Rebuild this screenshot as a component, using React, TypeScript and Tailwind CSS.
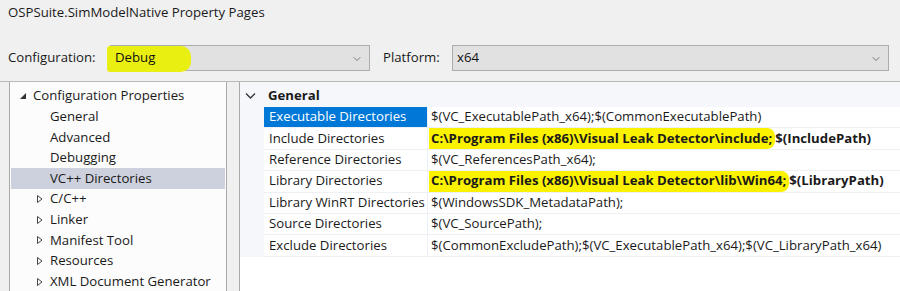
import { ChevronDown } from 'lucide-react';

const FONT = "font-['Segoe_UI','Open_Sans','Noto_Sans',sans-serif]";

interface TreeItem {
  label: string;
  kind: 'open' | 'closed' | 'leaf';
  depth: number;
  selected?: boolean;
}

const treeItems: TreeItem[] = [
  { label: 'Configuration Properties', kind: 'open', depth: 0 },
  { label: 'General', kind: 'leaf', depth: 1 },
  { label: 'Advanced', kind: 'leaf', depth: 1 },
  { label: 'Debugging', kind: 'leaf', depth: 1 },
  { label: 'VC++ Directories', kind: 'leaf', depth: 1, selected: true },
  { label: 'C/C++', kind: 'closed', depth: 1 },
  { label: 'Linker', kind: 'closed', depth: 1 },
  { label: 'Manifest Tool', kind: 'closed', depth: 1 },
  { label: 'Resources', kind: 'closed', depth: 1 },
  { label: 'XML Document Generator', kind: 'closed', depth: 1 },
];

interface PropRow {
  name: string;
  value: string;
  bold?: boolean;
  marked?: string;
  selected?: boolean;
}

const propRows: PropRow[] = [
  { name: 'Executable Directories', value: '$(VC_ExecutablePath_x64);$(CommonExecutablePath)', selected: true },
  {
    name: 'Include Directories',
    marked: 'C:\\Program Files (x86)\\Visual Leak Detector\\include;',
    value: '$(IncludePath)',
    bold: true,
  },
  { name: 'Reference Directories', value: '$(VC_ReferencesPath_x64);' },
  {
    name: 'Library Directories',
    marked: 'C:\\Program Files (x86)\\Visual Leak Detector\\lib\\Win64;',
    value: '$(LibraryPath)',
    bold: true,
  },
  { name: 'Library WinRT Directories', value: '$(WindowsSDK_MetadataPath);' },
  { name: 'Source Directories', value: '$(VC_SourcePath);' },
  { name: 'Exclude Directories', value: '$(CommonExcludePath);$(VC_ExecutablePath_x64);$(VC_LibraryPath_x64)' },
];

function Combo({ value, highlight, className }: { value: string; highlight?: boolean; className: string }) {
  return (
    <div className={`relative flex h-[26px] shrink-0 items-center border border-[#adadad] bg-[#e1e1e1] ${className}`}>
      {highlight && (
        <span className="absolute left-[-4px] top-[0px] h-[26px] w-[84px] rounded-r-[10px] rounded-l-[3px] bg-[#eaef12]" />
      )}
      <span className="relative pl-[4px] text-[#111]">{value}</span>
      <ChevronDown className="absolute right-[6px] top-[7px] h-[12px] w-[12px] text-[#555]" strokeWidth={1.5} />
    </div>
  );
}

function Arrow({ kind }: { kind: TreeItem['kind'] }) {
  if (kind === 'open') {
    return (
      <svg width="14" height="8" viewBox="0 0 14 8" className="shrink-0">
        <path d="M7 1 L7 7 L1 7 Z" fill="#333" />
      </svg>
    );
  }
  if (kind === 'closed') {
    return (
      <svg width="14" height="10" viewBox="0 0 14 10" className="shrink-0">
        <path d="M1.5 1.5 L6 5 L1.5 8.5 Z" fill="none" stroke="#444" strokeWidth="1" />
      </svg>
    );
  }
  return <span className="w-[14px] shrink-0" />;
}

export default function App() {
  return (
    <div className={`h-[291px] w-[900px] overflow-hidden bg-[#f0f0f0] text-[13.2px] text-[#1a1a1a] ${FONT}`}>
      {/* Title */}
      <div className="h-[26px] pl-[8px] pt-[2px] leading-[20px]">OSPSuite.SimModelNative Property Pages</div>

      {/* Configuration / Platform */}
      <div className="mt-[19px] flex items-center">
        <span className="w-[110px] shrink-0 pl-[8px]">Configuration:</span>
        <Combo value="Debug" highlight className="w-[260px]" />
        <span className="ml-[13px] w-[69px] shrink-0">Platform:</span>
        <Combo value="x64" className="w-[437px]" />
      </div>

      {/* Body */}
      <div className="mt-[10px] flex h-[300px] border-t border-[#b9b9b9]">
        {/* Tree */}
        <div className="ml-[9px] w-[218px] shrink-0 border-x border-[#a9a9a9] bg-[#fcfcfc] pt-[4px]">
          {treeItems.map((item) => (
            <div
              key={item.label}
              className={`mx-[1px] flex h-[20.6px] items-center ${item.selected ? 'bg-[#cdd1dd]' : ''} ${
                item.depth === 0 ? 'pl-[8px]' : 'pl-[25px]'
              }`}
            >
              <Arrow kind={item.kind} />
              <span className="whitespace-nowrap">{item.label}</span>
            </div>
          ))}
        </div>

        {/* Property grid */}
        <div className="ml-[12px] min-w-0 flex-1 border-l border-[#a9a9a9] bg-white">
          <div className="flex h-[25px] items-center bg-[#f5f7fb] pt-[3px]">
            <svg width="28" height="22" viewBox="0 0 28 22" className="shrink-0">
              <path d="M6 8.5 L10.5 13 L15 8.5" fill="none" stroke="#333" strokeWidth="1.3" />
            </svg>
            <span className="font-bold">General</span>
          </div>
          {propRows.map((row) => (
            <div key={row.name} className="flex h-[21.4px]">
              <div className="w-[24px] shrink-0 bg-[#f5f7fb]" />
              <div
                className={`flex w-[164px] shrink-0 items-center whitespace-nowrap border-b border-r border-[#edf0f5] pl-[5px] ${
                  row.selected ? 'bg-[#0078d7] text-white' : ''
                }`}
              >
                {row.name}
              </div>
              <div
                className={`flex flex-1 items-center whitespace-nowrap border-b border-[#edf0f5] pl-[3px] ${
                  row.bold ? 'font-bold' : ''
                }`}
              >
                {row.marked && (
                  <span className="-ml-[2px] flex h-full items-center rounded-r-[8px] bg-[#fbf200] pl-[2px] pr-[3px]">
                    {row.marked}
                  </span>
                )}
                <span>{row.value}</span>
              </div>
            </div>
          ))}
        </div>
      </div>
    </div>
  );
}
